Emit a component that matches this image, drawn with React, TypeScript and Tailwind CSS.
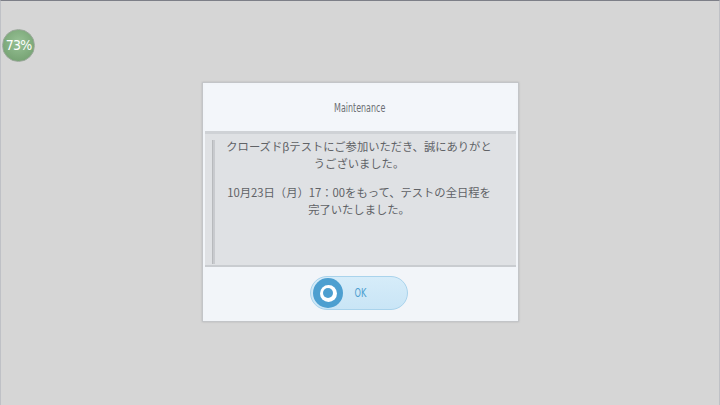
import React from "react";

export default function App() {
  const jp = { fontFamily: '"Noto Sans CJK JP", "Noto Sans", sans-serif' };
  const cond = { fontFamily: '"DejaVu Sans Condensed", "DejaVu Sans", sans-serif' };
  return (
    <div className="relative w-[720px] h-[405px] overflow-hidden bg-[#d6d6d6] border-t border-t-[#7d7f88] border-x border-x-[#bfc1c6]">
      <div className="absolute left-[1px] top-[28px] w-[33px] h-[33px] rounded-full bg-[radial-gradient(circle_at_50%_40%,#98c296,#6d9a6a)] border border-[#9aa89a] flex items-center justify-center">
        <span className="text-white text-[14px] tracking-[-0.8px]" style={{ fontFamily: '"DejaVu Sans Condensed", sans-serif' }}>73%</span>
      </div>
      <div className="flex items-start justify-center pt-[81px]">
        <div className="w-[317px] border border-[#c3c5c8] bg-[#f2f5f9] p-[2px] shadow-[0_0_2px_rgba(0,0,0,0.15)]">
          <div className="h-[46px] bg-[#f3f6fa] flex items-center justify-center">
            <span className="inline-block text-[#6b6e73] text-[13px] scale-x-[0.68]" style={cond}>Maintenance</span>
          </div>
          <div className="h-[136px] bg-[#dfe1e4] border-t-[3px] border-t-[#cfd2d6] border-b-[2px] border-b-[#c9ccd0] flex">
            <div className="ml-[7px] mt-[6px] w-[3px] h-[124px] bg-[#c8cace] border-l border-[#b8babd]" />
            <div className="flex-1 pt-[4px] pr-[12px] text-center text-[#606266] text-[11.3px] leading-[17px]" style={jp}>
              <p>クローズドβテストにご参加いただき、誠にありがと</p>
              <p>うございました。</p>
              <p className="mt-[12px]">10月23日（月）17：00をもって、テストの全日程を</p>
              <p>完了いたしました。</p>
            </div>
          </div>
          <div className="h-[52px] bg-[#f2f5f9] flex items-center justify-center">
            <div className="w-[98px] h-[34px] rounded-full bg-[linear-gradient(#d6ecf9,#c9e5f6)] border border-[#a9d3ec] flex items-center pl-[2px] ml-[-2px]">
              <div className="w-[30px] h-[30px] rounded-full bg-[#4d9fd0] flex items-center justify-center">
                <div className="w-[17px] h-[17px] rounded-full bg-white flex items-center justify-center">
                  <div className="w-[10px] h-[10px] rounded-full bg-[#4d9fd0]" />
                </div>
              </div>
              <span className="inline-block ml-[9px] text-[#4d9fd0] text-[13px] scale-x-[0.7]" style={cond}>OK</span>
            </div>
          </div>
        </div>
      </div>
    </div>
  );
}
